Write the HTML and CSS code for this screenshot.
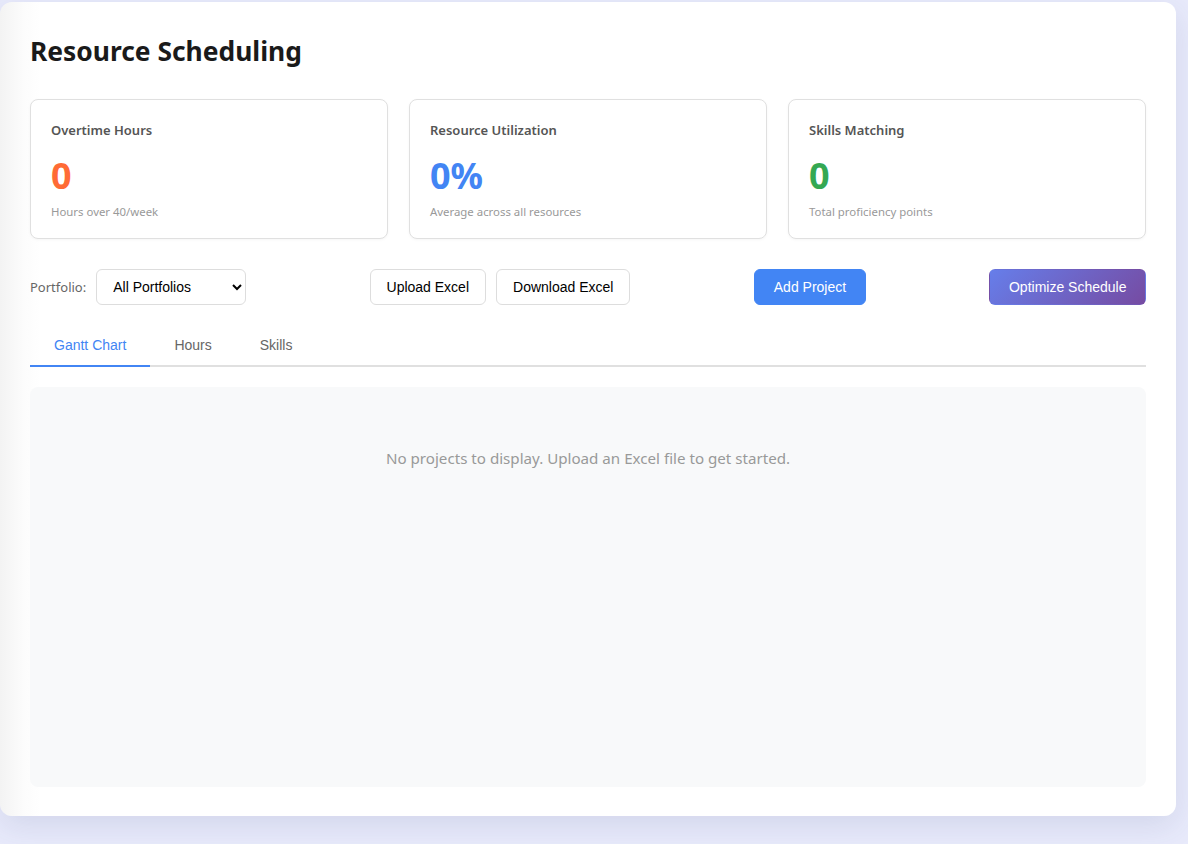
FILE: index.html
```html
<!DOCTYPE html>
<html>
<head>
<meta charset="utf-8">
<link rel="stylesheet" href="styles.css">
</head>
<body>
<div class="app">
  <h1 class="title">Resource Scheduling</h1>
  <div class="cards">
    <div class="card">
      <div class="card-title">Overtime Hours</div>
      <div class="card-value orange">0</div>
      <div class="card-sub">Hours over 40/week</div>
    </div>
    <div class="card">
      <div class="card-title">Resource Utilization</div>
      <div class="card-value blue">0%</div>
      <div class="card-sub">Average across all resources</div>
    </div>
    <div class="card">
      <div class="card-title">Skills Matching</div>
      <div class="card-value green">0</div>
      <div class="card-sub">Total proficiency points</div>
    </div>
  </div>
  <div class="controls">
    <div class="group">
      <label class="label">Portfolio:</label>
      <select class="select"><option>All Portfolios</option></select>
    </div>
    <div class="group gap10">
      <button class="btn">Upload Excel</button>
      <button class="btn">Download Excel</button>
    </div>
    <div class="group">
      <button class="btn btn-primary">Add Project</button>
    </div>
    <div class="group">
      <button class="btn btn-grad">Optimize Schedule</button>
    </div>
  </div>
  <div class="tabs">
    <div class="tab active">Gantt Chart</div>
    <div class="tab">Hours</div>
    <div class="tab">Skills</div>
  </div>
  <div class="panel">
    <p class="empty">No projects to display. Upload an Excel file to get started.</p>
  </div>
</div>
</body>
</html>
```
FILE: styles.css
```css
html, body {
  margin: 0;
  padding: 0;
  background: #e8eafb;
  height: 844px;
  overflow: hidden;
}
body {
  padding: 2px 12px 0 0;
  font-family: "Noto Sans", "Open Sans", sans-serif;
}
.app {
  box-sizing: border-box;
  width: 1176px;
  height: 814px;
  background: linear-gradient(to right, #f3f3f3 0px, #fcfcfc 24px, #ffffff 40px);
  border-radius: 12px;
  padding: 30px;
  box-shadow: 0 10px 30px rgba(60, 70, 120, 0.12);
}
.title {
  margin: 0 0 29px 0;
  font-size: 26.4px;
  font-weight: 700;
  color: #1a1a1a;
  line-height: 38px;
}
.cards {
  display: grid;
  grid-template-columns: repeat(3, 1fr);
  gap: 21px;
}
.card {
  height: 140px;
  box-sizing: border-box;
  border: 1px solid #e0e0e0;
  border-radius: 8px;
  background: #fff;
  padding: 20px;
  box-shadow: 0 1px 3px rgba(0,0,0,0.04);
}
.card-title {
  font-size: 13px;
  font-weight: 600;
  color: #555;
  line-height: 20px;
}
.card-value {
  font-size: 36px;
  font-weight: 700;
  line-height: 44px;
  margin-top: 14px;
}
.orange { color: #ff6b35; }
.blue { color: #4285f4; }
.green { color: #34a853; }
.card-sub {
  font-size: 11.4px;
  color: #999;
  margin-top: 6px;
  line-height: 16px;
}
.controls {
  display: flex;
  justify-content: space-between;
  align-items: center;
  margin-top: 30px;
}
.group {
  display: flex;
  align-items: center;
}
.gap10 { gap: 10px; }
.label {
  font-size: 13px;
  color: #666;
  margin-right: 10px;
}
.select {
  width: 150px;
  height: 36px;
  box-sizing: border-box;
  border: 1px solid #ddd;
  border-radius: 6px;
  background: #fff;
  padding: 0 12px;
  font-family: "Liberation Sans", Arial, sans-serif;
  font-size: 14px;
  color: #000;
}
.btn {
  font-family: "Liberation Sans", Arial, sans-serif;
  font-size: 14px;
  line-height: 16px;
  padding: 9px 16px;
  border: 1px solid #ddd;
  border-radius: 6px;
  background: #fff;
  color: #000;
}
.btn-primary {
  background: #4285f4;
  border-color: #4285f4;
  color: #fff;
  padding: 9px 19px;
}
.btn-grad {
  background: linear-gradient(135deg, #667eea 0%, #764ba2 100%);
  border-color: transparent;
  color: #fff;
  padding: 9px 18.5px;
}
.tabs {
  display: flex;
  margin-top: 22px;
  border-bottom: 2px solid #e0e0e0;
}
.tab {
  font-family: "Liberation Sans", Arial, sans-serif;
  font-size: 14px;
  line-height: 16px;
  color: #666;
  padding: 10px 24px 12px;
  margin-bottom: -2px;
  border-bottom: 2px solid transparent;
}
.tab.active {
  color: #4285f4;
  border-bottom-color: #4285f4;
}
.panel {
  margin-top: 20px;
  background: #f8f9fa;
  border-radius: 8px;
  height: 400px;
  box-sizing: border-box;
  padding-top: 60px;
}
.empty {
  margin: 0;
  text-align: center;
  color: #999;
  font-size: 15.15px;
  line-height: 22px;
}
```
